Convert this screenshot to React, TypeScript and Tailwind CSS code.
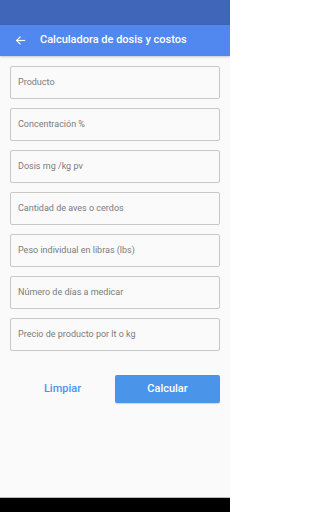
import React from "react";

const fields = [
  "Producto",
  "Concentración %",
  "Dosis mg /kg pv",
  "Cantidad de aves o cerdos",
  "Peso individual en libras (lbs)",
  "Número de días a medicar",
  "Precio de producto por lt o kg",
];

export default function App() {
  return (
    <div
      className="w-[230px] h-[512px] flex flex-col bg-[#fafafa] overflow-hidden"
      style={{ fontFamily: "Roboto, 'Liberation Sans', sans-serif" }}
    >
      <div className="h-[25px] bg-[#3f66b8] shrink-0" />
      <div className="h-[31px] bg-[#5088f0] flex items-center shrink-0 shadow-[0_1px_2px_rgba(0,0,0,0.2)]">
        <div className="w-[40px] flex justify-center pl-[1px]">
          <svg width="11" height="11" viewBox="0 0 24 24" fill="none" stroke="white" strokeWidth="2.6" strokeLinecap="square">
            <path d="M21 12H4" />
            <path d="M11 4.5L3.5 12L11 19.5" />
          </svg>
        </div>
        <span className="text-white text-[11px] font-medium">Calculadora de dosis y costos</span>
      </div>
      <div className="flex flex-col gap-[9px] px-[10px] pt-[10px]">
        {fields.map((f) => (
          <div
            key={f}
            className="h-[33px] border border-[#c8c8c8] rounded-[2px] flex items-center pl-[7px] text-[9px] text-[#7a7a7a] bg-[#fafafa]"
          >
            {f}
          </div>
        ))}
      </div>
      <div className="flex items-center px-[10px] mt-[24px]">
        <div className="w-[105px] flex justify-center text-[11px] font-medium text-[#4a94ea]">Limpiar</div>
        <div className="flex-1 h-[28px] rounded-[2px] bg-[#4a94ea] flex items-center justify-center text-white text-[11px] font-medium shadow-[0_1px_1px_rgba(0,0,0,0.15)]">
          Calcular
        </div>
      </div>
      <div className="flex-1" />
      <div className="h-[1px] bg-[#bdbdbd] shrink-0" />
      <div className="h-[14px] bg-black shrink-0" />
    </div>
  );
}
